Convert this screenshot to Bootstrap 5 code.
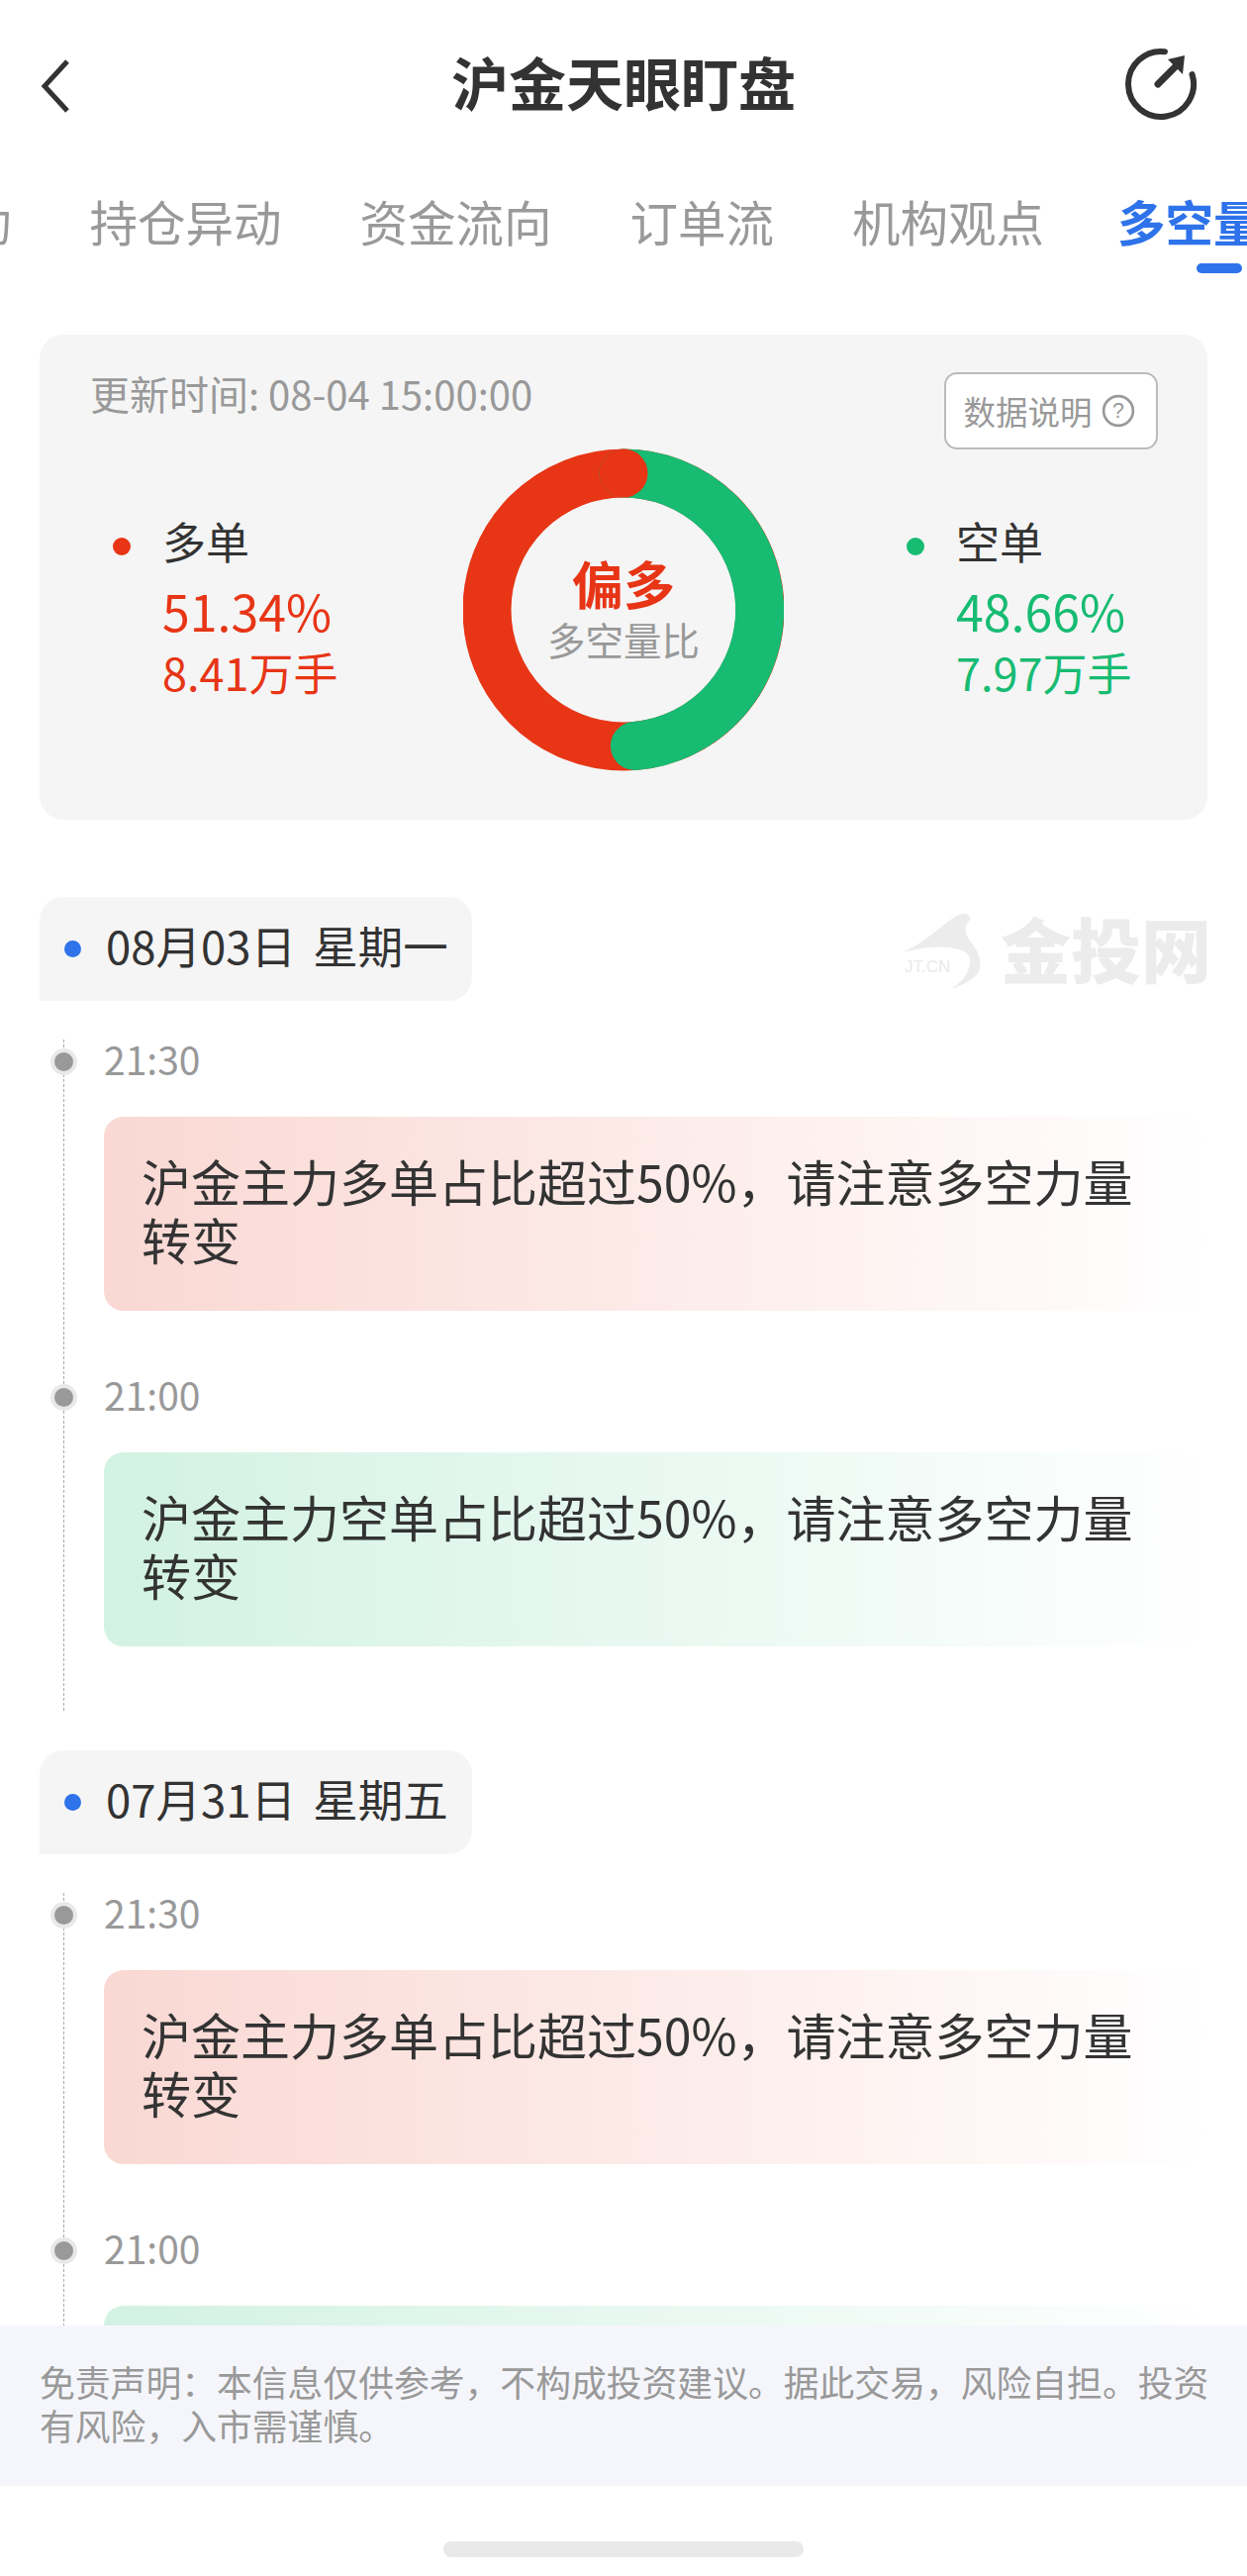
<!DOCTYPE html>
<html lang="zh-CN">
<head>
<meta charset="utf-8">
<title>沪金天眼盯盘</title>
<link href="https://cdn.jsdelivr.net/npm/bootstrap@5.3.0/dist/css/bootstrap.min.css" rel="stylesheet">
<style>
html,body{margin:0;background:#fff;}
body{width:1260px;height:2602px;overflow:hidden;font-family:"Noto Sans CJK SC","Liberation Sans",sans-serif;color:#333;}
.viewport{height:2349px;overflow:hidden;}
.topbar{height:170px;padding:0 49px 0 41px;}
.topbar-side{flex:1 1 0;}
.topbar-back{margin-top:4px;}
.topbar-title{font-size:58px;font-weight:700;line-height:70px;color:#333;padding-bottom:6px;margin-left:8px;}
.tabbar{height:112px;padding-top:25px;gap:79px;}
.tab-item{font-size:48.5px;line-height:56px;color:#999;white-space:nowrap;flex:none;position:relative;}
.tab-item.first{margin-left:-182.5px;}
.tab-item.active{color:#2f73ea;font-weight:700;margin-left:-5px;}
.tab-item.active::after{content:"";position:absolute;left:80px;top:71px;width:46px;height:10px;border-radius:5px;background:#2f73ea;}
.summary{margin:56px 40px 0;height:490px;background:#f5f5f5;border-radius:24px;padding-top:38px;}
.summary-top{padding:0 50px 0 51px;}
.update-time{font-size:40px;line-height:42px;color:#999;}
.explain{width:216px;height:78px;background:#fff;border:2px solid #bbb;border-radius:13px;font-size:32.5px;color:#999;gap:9px;padding-right:4px;}
.summary-body{margin-top:-1px;}
.legend-col{width:428px;padding-top:63px;}
.legend-col.left-col{padding-left:74px;}
.legend-col.right-col{padding-left:124px;}
.legend-dot{width:18px;height:18px;border-radius:50%;margin-top:27px;}
.legend-text{margin-left:32px;}
.legend-label{font-size:44px;line-height:60px;color:#333;}
.legend-pct{font-size:50px;line-height:80px;}
.legend-vol{font-size:45px;line-height:46px;}
.c-red{color:#e73516;}.c-green{color:#17bb72;}
.bg-red{background:#e73516;}.bg-green{background:#17bb72;}
.donut{width:324px;height:326px;position:relative;flex:none;}
.donut-center{position:absolute;left:0;right:0;top:106px;text-align:center;}
.donut-main{font-size:52px;font-weight:700;line-height:60px;color:#e73516;}
.donut-sub{font-size:38.5px;line-height:52px;color:#999;}
.day-row{margin:78px 40px 0;}
.day-row.next{margin-top:40px;}
.day-pill{width:437px;height:105px;background:#f5f5f5;border-radius:24px 24px 24px 0;padding-left:25px;font-size:45.5px;word-spacing:7px;color:#333;}
.day-dot{width:17px;height:17px;border-radius:50%;background:#2f73ea;margin-right:25px;flex:none;}
.day-text{padding-bottom:8px;}
.timeline{margin:39px 40px 0 64px;padding:0 0 65px 40px;border-left:1px dashed #aaa;}
.event{position:relative;}
.event + .event{margin-top:65px;}
.event-time{font-size:39px;line-height:38px;color:#999;}
.event-node{position:absolute;left:-54px;top:9px;width:27px;height:27px;border-radius:50%;background:#999;border:4px solid #e9e9e9;}
.event-box{margin-top:40px;height:196px;border-radius:20px;padding:35px 38px;font-size:50px;line-height:59px;color:#333;}
.event-box.long-tone{background:linear-gradient(90deg,#fad8d3,#fff);}
.event-box.short-tone{background:linear-gradient(90deg,#d2f2e3,#fff);}
.disclaimer{height:162px;background:#f5f6fb;padding:34px 24px 0 40px;font-size:35.8px;line-height:44px;color:#999;}
.home-bar{width:364px;height:16px;margin:56px auto 0;border-radius:8px;background:#e9e9e9;}
.watermark-text{font-size:71px;font-weight:900;line-height:70px;color:#ececec;padding-bottom:6px;margin-right:-4px;}
.watermark-cn{font-family:"Liberation Sans",sans-serif;font-size:17px;fill:#eaeaea;}
</style>
</head>
<body>
<div class="viewport">
  <header class="topbar d-flex align-items-center">
    <div class="topbar-side">
      <svg class="topbar-back" width="30" height="54" viewBox="0 0 30 54"><path d="M27 2 L4 27 L27 52" fill="none" stroke="#333" stroke-width="5"/></svg>
    </div>
    <div class="topbar-title">沪金天眼盯盘</div>
    <div class="topbar-side text-end">
      <svg width="76" height="76" viewBox="0 0 76 76"><path d="M42 5.2 A33 33 0 1 0 69.5 28" fill="none" stroke="#333" stroke-width="6" stroke-linecap="round"/><path d="M35 38 L56 17" stroke="#333" stroke-width="7" stroke-linecap="round" fill="none"/><path d="M62 9 L45 13 L60 28 Z" fill="#333"/></svg>
    </div>
  </header>

  <nav class="tabbar d-flex flex-nowrap overflow-hidden">
    <div class="tab-item first">主力异动</div>
    <div class="tab-item">持仓异动</div>
    <div class="tab-item">资金流向</div>
    <div class="tab-item">订单流</div>
    <div class="tab-item">机构观点</div>
    <div class="tab-item active">多空量比</div>
  </nav>

  <section class="summary">
    <div class="summary-top d-flex justify-content-between align-items-start">
      <div class="update-time">更新时间: 08-04 15:00:00</div>
      <div class="explain d-flex align-items-center justify-content-center">数据说明
        <svg width="34" height="34" viewBox="0 0 32 32"><circle cx="16" cy="16" r="14" fill="none" stroke="#999" stroke-width="2.5"/><text x="16" y="23" text-anchor="middle" font-size="20" fill="#999" font-family="Liberation Sans">?</text></svg>
      </div>
    </div>
    <div class="summary-body d-flex">
      <div class="legend-col left-col d-flex align-items-start">
        <span class="legend-dot bg-red"></span>
        <div class="legend-text">
          <div class="legend-label">多单</div>
          <div class="legend-pct c-red">51.34%</div>
          <div class="legend-vol c-red">8.41万手</div>
        </div>
      </div>
      <div class="donut">
        <svg width="324" height="326" viewBox="0 0 324 326">
          <circle cx="162" cy="163" r="138" fill="none" stroke="#e73516" stroke-width="49"/>
          <path d="M162 25 A138 138 0 0 1 173.4 300.5" fill="none" stroke="#17bb72" stroke-width="49" stroke-linecap="round"/>
          <circle cx="162" cy="25" r="24.5" fill="#e73516"/>
        </svg>
        <div class="donut-center">
          <div class="donut-main">偏多</div>
          <div class="donut-sub">多空量比</div>
        </div>
      </div>
      <div class="legend-col right-col d-flex align-items-start">
        <span class="legend-dot bg-green"></span>
        <div class="legend-text">
          <div class="legend-label">空单</div>
          <div class="legend-pct c-green">48.66%</div>
          <div class="legend-vol c-green">7.97万手</div>
        </div>
      </div>
    </div>
  </section>

  <div class="day-row d-flex justify-content-between align-items-center">
    <div class="day-pill d-flex align-items-center"><span class="day-dot"></span><span class="day-text">08月03日 星期一</span></div>
    <div class="d-flex align-items-center">
      <svg width="96" height="80" viewBox="0 0 96 80" class="me-1"><path d="M0 43 C28 32 42 12 58 5 C64 2 68 5 70 9 C64 14 63 22 68 30 C78 42 82 52 78 62 C74 70 62 76 50 80 C62 72 70 62 69 50 C68 42 60 40 48 38 C32 36 14 40 0 43 Z" fill="#ececec"/><text x="3" y="63" class="watermark-cn">JT.CN</text></svg>
      <div class="watermark-text">金投网</div>
    </div>
  </div>
  <div class="timeline">
    <div class="event">
      <span class="event-node"></span>
      <div class="event-time">21:30</div>
      <div class="event-box long-tone">沪金主力多单占比超过50%，请注意多空力量转变</div>
    </div>
    <div class="event">
      <span class="event-node"></span>
      <div class="event-time">21:00</div>
      <div class="event-box short-tone">沪金主力空单占比超过50%，请注意多空力量转变</div>
    </div>
  </div>

  <div class="day-row next d-flex">
    <div class="day-pill d-flex align-items-center"><span class="day-dot"></span><span class="day-text">07月31日 星期五</span></div>
  </div>
  <div class="timeline">
    <div class="event">
      <span class="event-node"></span>
      <div class="event-time">21:30</div>
      <div class="event-box long-tone">沪金主力多单占比超过50%，请注意多空力量转变</div>
    </div>
    <div class="event">
      <span class="event-node"></span>
      <div class="event-time">21:00</div>
      <div class="event-box short-tone">沪金主力空单占比超过50%，请注意多空力量转变</div>
    </div>
  </div>
</div>
<footer class="disclaimer">免责声明：本信息仅供参考，不构成投资建议。据此交易，风险自担。投资有风险，入市需谨慎。</footer>
<div class="home-bar"></div>
<script src="https://cdn.jsdelivr.net/npm/bootstrap@5.3.0/dist/js/bootstrap.bundle.min.js"></script>
</body>
</html>
